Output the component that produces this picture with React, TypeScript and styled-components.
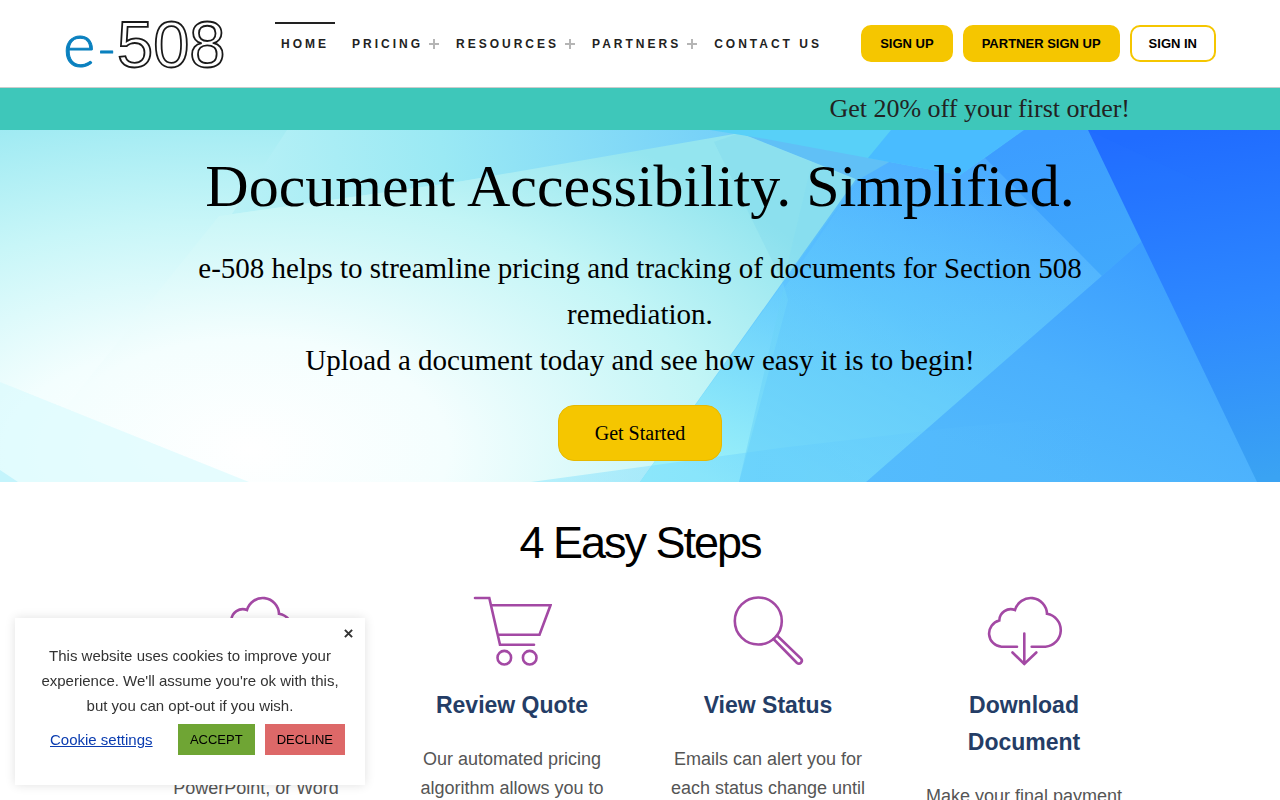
import React from "react";
import styled, { createGlobalStyle } from "styled-components";

const Global = createGlobalStyle`
  *, *::before, *::after { box-sizing: border-box; }
  body { margin: 0; background: #fff; font-family: "Liberation Sans", Arial, sans-serif; color: #222; }
  h1, h2, h3, p, ul { margin: 0; padding: 0; }
`;

const Header = styled.header`
  display: flex;
  align-items: flex-start;
  height: 88px;
  padding: 0 64px;
  border-bottom: 1px solid #ccc;
`;

const LogoLink = styled.a`
  display: block;
  flex: none;
  svg { display: block; overflow: visible; }
`;

const Nav = styled.nav`
  margin: 22px 0 0 51px;
`;

const NavList = styled.ul`
  display: flex;
  gap: 11px;
  list-style: none;
`;

const NavLink = styled.a<{ $active?: boolean; $menu?: boolean }>`
  display: flex;
  align-items: center;
  gap: 6px;
  padding: 12px ${(p) => (p.$menu ? "0" : "6px")} 12px 6px;
  border-top: 2px solid ${(p) => (p.$active ? "#222" : "transparent")};
  color: #222;
  font-size: 12px;
  line-height: 16px;
  font-weight: 700;
  letter-spacing: 3px;
  text-decoration: none;
  white-space: nowrap;
  svg { display: block; }
`;

const Actions = styled.div`
  display: flex;
  gap: 10px;
  margin: 25px 0 0 auto;
`;

const ActionButton = styled.button<{ $outline?: boolean }>`
  height: 37px;
  padding: 0 17px;
  border: 2px solid #f5c600;
  border-radius: 10px;
  background: ${(p) => (p.$outline ? "#fff" : "#f5c600")};
  color: #000;
  font: 700 13px/20px "Liberation Sans", Arial, sans-serif;
  white-space: nowrap;
`;

const Promo = styled.div`
  padding: 0 150px 0 0;
  background: #3ec7ba;
  color: #222;
  font: 26px/42px "Liberation Serif", "Times New Roman", serif;
  text-align: right;
`;

const Hero = styled.section`
  position: relative;
  overflow: hidden;
  padding: 20px 24px 21px;
  font-family: "Liberation Serif", "Times New Roman", serif;
  color: #000;
  text-align: center;
`;

const HeroArt = styled.svg`
  position: absolute;
  inset: 0;
  width: 100%;
  height: 100%;
`;

const HeroContent = styled.div`
  position: relative;
  max-width: 960px;
  margin: 0 auto;
`;

const HeroTitle = styled.h1`
  font-size: 60px;
  line-height: 72px;
  font-weight: 400;
`;

const HeroText = styled.p`
  margin: 23px 0 22px;
  font-size: 29px;
  line-height: 46px;
`;

const StartButton = styled.button`
  display: block;
  height: 56px;
  margin: 0 auto;
  padding: 0 36px;
  border: 1px solid #e6b800;
  border-radius: 16px;
  background: #f5c600;
  color: #000;
  font: 20px/24px "Liberation Serif", "Times New Roman", serif;
`;

const Steps = styled.section`
  padding: 34px 10% 40px;
`;

const StepsTitle = styled.h2`
  color: #000;
  font-size: 45px;
  line-height: 54px;
  font-weight: 400;
  letter-spacing: -2px;
  text-align: center;
`;

const StepGrid = styled.div`
  display: grid;
  grid-template-columns: repeat(4, 1fr);
  margin-top: 26px;
`;

const Step = styled.article`
  padding: 0 26px;
  text-align: center;
  svg { display: block; margin: 0 auto; }
`;

const StepTitle = styled.h3`
  margin: 19px 0 21px;
  color: #243d66;
  font-size: 23px;
  line-height: 37px;
  font-weight: 700;
`;

const StepText = styled.p`
  color: #555;
  font-size: 18px;
  line-height: 29px;
`;

const CookieBox = styled.aside`
  position: fixed;
  left: 15px;
  bottom: 15px;
  width: 350px;
  padding: 25px 20px 30px;
  background: #fff;
  box-shadow: 0 0 10px rgba(0, 0, 0, 0.12);
  color: #333;
  font-size: 15px;
  line-height: 25px;
  text-align: center;
`;

const CloseButton = styled.button`
  position: absolute;
  top: 5px;
  right: 7px;
  display: grid;
  place-items: center;
  width: 20px;
  height: 20px;
  padding: 0;
  border: 0;
  background: none;
`;

const CookieActions = styled.div`
  display: flex;
  align-items: center;
  gap: 10px;
  margin-top: 6px;
`;

const CookieLink = styled.a`
  margin: 0 auto 0 15px;
  color: #0a3cb0;
  font-size: 15px;
`;

const CookieButton = styled.button<{ $color: string }>`
  height: 31px;
  padding: 0 12px;
  border: 0;
  background: ${(p) => p.$color};
  color: #000;
  font: 13px/20px "Liberation Sans", Arial, sans-serif;
`;

function Plus() {
  return (
    <svg width="10" height="10" viewBox="0 0 10 10" aria-hidden="true">
      <path d="M5 0V10M0 5H10" stroke="#b5b5b5" strokeWidth="2" />
    </svg>
  );
}

function Logo() {
  return (
    <svg width="160" height="87" viewBox="0 0 160 87" role="img" aria-label="e-508">
      <g fontFamily="Lato, sans-serif" fontWeight="300" fill="#0a80bf" stroke="#0a80bf" strokeLinejoin="round">
        <text x="-1" y="67" fontSize="62" strokeWidth="1">e</text>
        <text x="33" y="67" fontSize="52" strokeWidth="1">-</text>
      </g>
      <text x="53" y="67" fontFamily="Liberation Sans, Arial, sans-serif" fontSize="65" fill="#fff" stroke="#1a1a1a" strokeWidth="1.8">508</text>
    </svg>
  );
}

function StepIcon({ children }: { children: React.ReactNode }) {
  return (
    <svg width="80" height="72" viewBox="0 0 80 72" fill="none" stroke="#a349a4" strokeWidth="2.6" strokeLinecap="round" aria-hidden="true">
      {children}
    </svg>
  );
}

const cloud = "M33 50.700H17.500A13.300 13.300 0 0 1 15.300 24.500A11.500 11.500 0 0 1 31 14A16.300 16.300 0 0 1 63 17.800A16.600 16.600 0 0 1 61.500 50.700H47.700";

const steps = [
  {
    title: "Upload File",
    text: "Upload your PDF, Excel, PowerPoint, or Word",
    icon: <><path d={cloud} /><path d="M40.300 68V38M28.300 49.500L40.300 37.500L52.300 49.500" /></>,
  },
  {
    title: "Review Quote",
    text: "Our automated pricing algorithm allows you to",
    icon: <><path d="M3 2H17.300L28 48.800H62" /><path d="M19.700 9.300H78.500L67.500 38.700H26.500" /><circle cx="32.300" cy="61.700" r="6.800" /><circle cx="57.700" cy="61.700" r="6.800" /></>,
  },
  {
    title: "View Status",
    text: "Emails can alert you for each status change until",
    icon: <><circle cx="30.300" cy="25" r="23.500" /><path d="M45.500 43L69 67A3 3 0 0 0 73.200 62.800L49.500 40" /></>,
  },
  {
    title: "Download Document",
    text: "Make your final payment",
    icon: <><path d={cloud} /><path d="M40.300 37.500V68M28.500 56.500L40.300 68L52.300 56.500" /></>,
  },
];

const links = [
  { label: "HOME", active: true },
  { label: "PRICING", menu: true },
  { label: "RESOURCES", menu: true },
  { label: "PARTNERS", menu: true },
  { label: "CONTACT US" },
];

function HeroBackground() {
  return (
    <HeroArt viewBox="0 0 1280 352" preserveAspectRatio="none" aria-hidden="true">
      <defs>
        <radialGradient id="base" gradientUnits="userSpaceOnUse" cx="0" cy="0" r="1" gradientTransform="translate(210 320) scale(680 350)">
          <stop offset="0" stopColor="#fff" />
          <stop offset="0.3" stopColor="#f3fefe" />
          <stop offset="0.65" stopColor="#c8f6f8" />
          <stop offset="1" stopColor="#9be9f2" />
        </radialGradient>
        <radialGradient id="glow" gradientUnits="userSpaceOnUse" cx="0" cy="0" r="1" gradientTransform="translate(250 320) scale(660 370)">
          <stop offset="0" stopColor="#fff" />
          <stop offset="0.3" stopColor="#f4fefe" />
          <stop offset="0.7" stopColor="#c2f5f6" />
          <stop offset="1" stopColor="#94e5ef" />
        </radialGradient>
        <linearGradient id="sky" gradientUnits="userSpaceOnUse" x1="240" y1="90" x2="760" y2="0">
          <stop offset="0" stopColor="#b8f1f6" />
          <stop offset="0.4" stopColor="#9ae9f4" />
          <stop offset="1" stopColor="#70cdf9" />
        </linearGradient>
        <linearGradient id="azure" gradientUnits="userSpaceOnUse" x1="1000" y1="20" x2="820" y2="352">
          <stop offset="0" stopColor="#4aaaff" />
          <stop offset="0.5" stopColor="#58bfff" />
          <stop offset="1" stopColor="#7adcfc" />
        </linearGradient>
        <linearGradient id="strip" gradientUnits="userSpaceOnUse" x1="800" y1="150" x2="720" y2="352">
          <stop offset="0" stopColor="#72d8fb" stopOpacity="0.3" />
          <stop offset="1" stopColor="#9cf1f9" />
        </linearGradient>
        <linearGradient id="facet" gradientUnits="userSpaceOnUse" x1="1000" y1="60" x2="960" y2="270">
          <stop offset="0" stopColor="#69d2f8" stopOpacity="0" />
          <stop offset="1" stopColor="#69d2f8" stopOpacity="0.5" />
        </linearGradient>
        <linearGradient id="ridge" gradientUnits="userSpaceOnUse" x1="1080" y1="0" x2="1110" y2="150">
          <stop offset="0" stopColor="#3c9dff" />
          <stop offset="1" stopColor="#41a9fc" />
        </linearGradient>
        <linearGradient id="lower" gradientUnits="userSpaceOnUse" x1="1150" y1="110" x2="1060" y2="352">
          <stop offset="0" stopColor="#3a9cff" />
          <stop offset="0.6" stopColor="#4bb0fd" />
          <stop offset="1" stopColor="#51b8fc" />
        </linearGradient>
        <linearGradient id="deep" gradientUnits="userSpaceOnUse" x1="1190" y1="0" x2="1240" y2="352">
          <stop offset="0" stopColor="#206cff" />
          <stop offset="0.5" stopColor="#2d87ff" />
          <stop offset="1" stopColor="#3aa3f3" />
        </linearGradient>
        <linearGradient id="floor" gradientUnits="userSpaceOnUse" x1="531" y1="0" x2="1100" y2="0">
          <stop offset="0" stopColor="#8ae6fc" stopOpacity="0.5" />
          <stop offset="0.4" stopColor="#5fcbff" stopOpacity="0.35" />
          <stop offset="1" stopColor="#5abcff" stopOpacity="0" />
        </linearGradient>
      </defs>
      <rect width="1280" height="352" fill="url(#base)" />
      <polygon points="287,0 750,0 750,6 457,52 219,86 232,84" fill="url(#sky)" />
      <polygon points="219,86 457,52 740,3 900,68 640,352 249,352 65,278" fill="url(#glow)" />
      <polygon points="0,252 249,352 0,352" fill="#d9fafd" opacity="0.65" />
      <polygon points="0,340 18,352 0,352" fill="#c4f4fc" />
      <polygon points="891,0 1280,0 1280,352 640,352" fill="url(#azure)" />
      <polygon points="714,12 740,3 858,50 783,153" fill="#62c5ec" opacity="0.16" />
      <polygon points="812,32 858,50 783,153" fill="#6fd5f5" opacity="0.15" />
      <polygon points="783,153 788,170 739,352 640,352" fill="url(#strip)" />
      <polygon points="740,3 891,0 891,31 858,50" fill="#60c0f6" />
      <polygon points="710,0 1024,0 960,45 760,8" fill="#58d0f8" />
      <polygon points="891,0 1024,0 960,45 868,28" fill="#49bcff" />
      <polygon points="985,28 1102,146 866,352 739,352 783,160 858,50" fill="url(#facet)" />
      <polygon points="985,28 1024,0 1088,0 1143,110 1102,146" fill="url(#ridge)" />
      <polygon points="1143,110 1280,-8 1280,352 866,352" fill="url(#lower)" />
      <polygon points="1088,0 1280,0 1280,352 1257,352" fill="url(#deep)" />
      <polygon points="1143,110 1207,55 1088,0" fill="#2b7bff" opacity="0.12" />
      <polygon points="531,352 780,318 960,297 1100,285 1100,352" fill="url(#floor)" />
    </HeroArt>
  );
}

export default function App() {
  return (
    <>
      <Global />
      <Header>
        <LogoLink href="#"><Logo /></LogoLink>
        <Nav>
          <NavList>
            {links.map((l) => (
              <li key={l.label}>
                <NavLink href="#" $active={l.active} $menu={l.menu}>
                  {l.label}
                  {l.menu && <Plus />}
                </NavLink>
              </li>
            ))}
          </NavList>
        </Nav>
        <Actions>
          <ActionButton>SIGN UP</ActionButton>
          <ActionButton>PARTNER SIGN UP</ActionButton>
          <ActionButton $outline>SIGN IN</ActionButton>
        </Actions>
      </Header>
      <Promo>Get 20% off your first order!</Promo>
      <main>
        <Hero>
          <HeroBackground />
          <HeroContent>
            <HeroTitle>Document Accessibility. Simplified.</HeroTitle>
            <HeroText>
              e-508 helps to streamline pricing and tracking of documents for Section 508 remediation.
              <br />
              Upload a document today and see how easy it is to begin!
            </HeroText>
            <StartButton>Get Started</StartButton>
          </HeroContent>
        </Hero>
        <Steps>
          <StepsTitle>4 Easy Steps</StepsTitle>
          <StepGrid>
            {steps.map((s) => (
              <Step key={s.title}>
                <StepIcon>{s.icon}</StepIcon>
                <StepTitle>{s.title}</StepTitle>
                <StepText>{s.text}</StepText>
              </Step>
            ))}
          </StepGrid>
        </Steps>
      </main>
      <CookieBox aria-label="Cookie notice">
        <CloseButton aria-label="Close">
          <svg width="9" height="9" viewBox="0 0 10 10" aria-hidden="true">
            <path d="M1 1L9 9M9 1L1 9" stroke="#333" strokeWidth="2.2" />
          </svg>
        </CloseButton>
        <p>This website uses cookies to improve your experience. We'll assume you're ok with this, but you can opt-out if you wish.</p>
        <CookieActions>
          <CookieLink href="#">Cookie settings</CookieLink>
          <CookieButton $color="#6fa534">ACCEPT</CookieButton>
          <CookieButton $color="#dd6868">DECLINE</CookieButton>
        </CookieActions>
      </CookieBox>
    </>
  );
}
